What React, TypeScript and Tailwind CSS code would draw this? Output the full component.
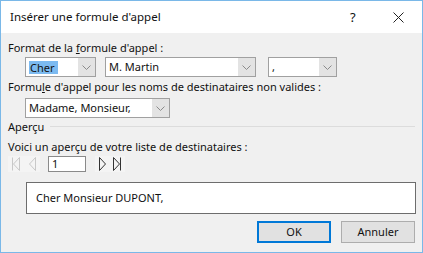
import React from "react";

const Chevron = () => (
  <svg width="9" height="5" viewBox="0 0 9 5" fill="none">
    <polyline points="0.5,0.5 4.5,4.5 8.5,0.5" stroke="#8a8a8a" strokeWidth="1" />
  </svg>
);

function Combo({ w, text, selected }: { w: string; text: string; selected?: boolean }) {
  return (
    <div className={`flex h-[20px] border border-[#a0a0a0] bg-white ${w}`}>
      <div className="flex-1 flex items-center pl-[3px] overflow-hidden">
        {selected ? (
          <span className="bg-[#7cbaf0] pl-[1px] pr-[3px] leading-[13px]">{text}</span>
        ) : (
          <span className="leading-[14px]">{text}</span>
        )}
      </div>
      <div className="w-[17px] flex items-center justify-center bg-[#e3e3e3]">
        <Chevron />
      </div>
    </div>
  );
}

const FirstIcon = ({ c }: { c: string }) => (
  <svg width="9" height="14" viewBox="0 0 9 14" fill="none">
    <line x1="1.5" y1="0.5" x2="1.5" y2="13.5" stroke={c} />
    <polygon points="8.5,0.5 2.5,7 8.5,13.5" stroke={c} fill="none" />
  </svg>
);
const PrevIcon = ({ c }: { c: string }) => (
  <svg width="8" height="14" viewBox="0 0 8 14" fill="none">
    <polygon points="7.5,0.5 1.5,7 7.5,13.5" stroke={c} fill="none" />
  </svg>
);
const NextIcon = ({ c }: { c: string }) => (
  <svg width="8" height="14" viewBox="0 0 8 14" fill="none">
    <polygon points="0.5,0.5 6.5,7 0.5,13.5" stroke={c} fill="none" />
  </svg>
);
const LastIcon = ({ c }: { c: string }) => (
  <svg width="9" height="14" viewBox="0 0 9 14" fill="none">
    <polygon points="0.5,0.5 6.5,7 0.5,13.5" stroke={c} fill="none" />
    <line x1="7.5" y1="0.5" x2="7.5" y2="13.5" stroke={c} />
  </svg>
);

export default function App() {
  return (
    <div
      className="w-[423px] h-[253px] border border-[#7ab8e8] bg-[#f0f0f0] flex flex-col text-[11px] text-[#111]"
      style={{ fontFamily: '"Noto Sans", "Open Sans", sans-serif' }}
    >
      <div className="h-[32px] bg-white flex items-center pl-[9px] shrink-0">
        <span className="flex-1 text-[11.5px] leading-[16px]">Insérer une formule d'appel</span>
        <span className="w-[8px] text-[13px] leading-[16px] mr-[35px]">?</span>
        <svg width="11" height="11" viewBox="0 0 11 11" className="mr-[18px]">
          <line x1="0.5" y1="0.5" x2="10.5" y2="10.5" stroke="#222" />
          <line x1="10.5" y1="0.5" x2="0.5" y2="10.5" stroke="#222" />
        </svg>
      </div>
      <div className="flex flex-col pl-[7px] pr-[6px] pt-[7px]">
        <div className="leading-[16px]">
          Format de la <span className="underline">f</span>ormule d'appel :
        </div>
        <div className="flex mt-[1px] ml-[17px]">
          <Combo w="w-[71px]" text="Cher" selected />
          <div className="ml-[9px]">
            <Combo w="w-[151px]" text="M. Martin" />
          </div>
          <div className="ml-[12px]">
            <Combo w="w-[69px]" text="," />
          </div>
        </div>
        <div className="leading-[16px] mt-[2px]">
          Formu<span className="underline">l</span>e d'appel pour les noms de destinataires non valides :
        </div>
        <div className="flex mt-[3px] ml-[17px]">
          <Combo w="w-[145px]" text="Madame, Monsieur," />
        </div>
        <div className="flex items-center mt-[1px]">
          <span className="leading-[16px]">Aperçu</span>
          <div className="flex-1 h-px bg-[#dcdcdc] ml-[6px] mr-[1px] mt-[-2px]" />
        </div>
        <div className="leading-[16px] mt-[4px]">Voici un aperçu de votre liste de destinataires :</div>
        <div className="flex items-center mt-[1px] h-[16px]">
          <div className="flex items-center gap-[8px] w-[32px] h-[16px] pl-[3px] bg-[#f4f4f4]">
            <FirstIcon c="#c8c8c8" />
            <PrevIcon c="#c8c8c8" />
          </div>
          <div className="ml-[8px] w-[38px] h-[16px] border border-[#8a8a8a] bg-white flex items-center pl-[3px] leading-[14px]">
            1
          </div>
          <div className="ml-[9px] flex items-center gap-[6px] w-[30px] h-[16px] pl-[4px] bg-[#f4f4f4]">
            <NextIcon c="#333" />
            <LastIcon c="#333" />
          </div>
        </div>
        <div className="mt-[10px] ml-[18px] w-[390px] h-[32px] border border-[#6d6d6d] bg-white flex items-center pl-[9px] leading-[16px]">
          Cher Monsieur DUPONT,
        </div>
        <div className="flex justify-end mt-[7px] mr-[1px] gap-[10px]">
          <div className="w-[74px] h-[22px] border-2 border-[#0078d7] bg-[#e1e1e1] flex items-center justify-center leading-[14px]">
            OK
          </div>
          <div className="w-[74px] h-[22px] border border-[#adadad] bg-[#e1e1e1] flex items-center justify-center leading-[14px]">
            Annuler
          </div>
        </div>
      </div>
    </div>
  );
}
